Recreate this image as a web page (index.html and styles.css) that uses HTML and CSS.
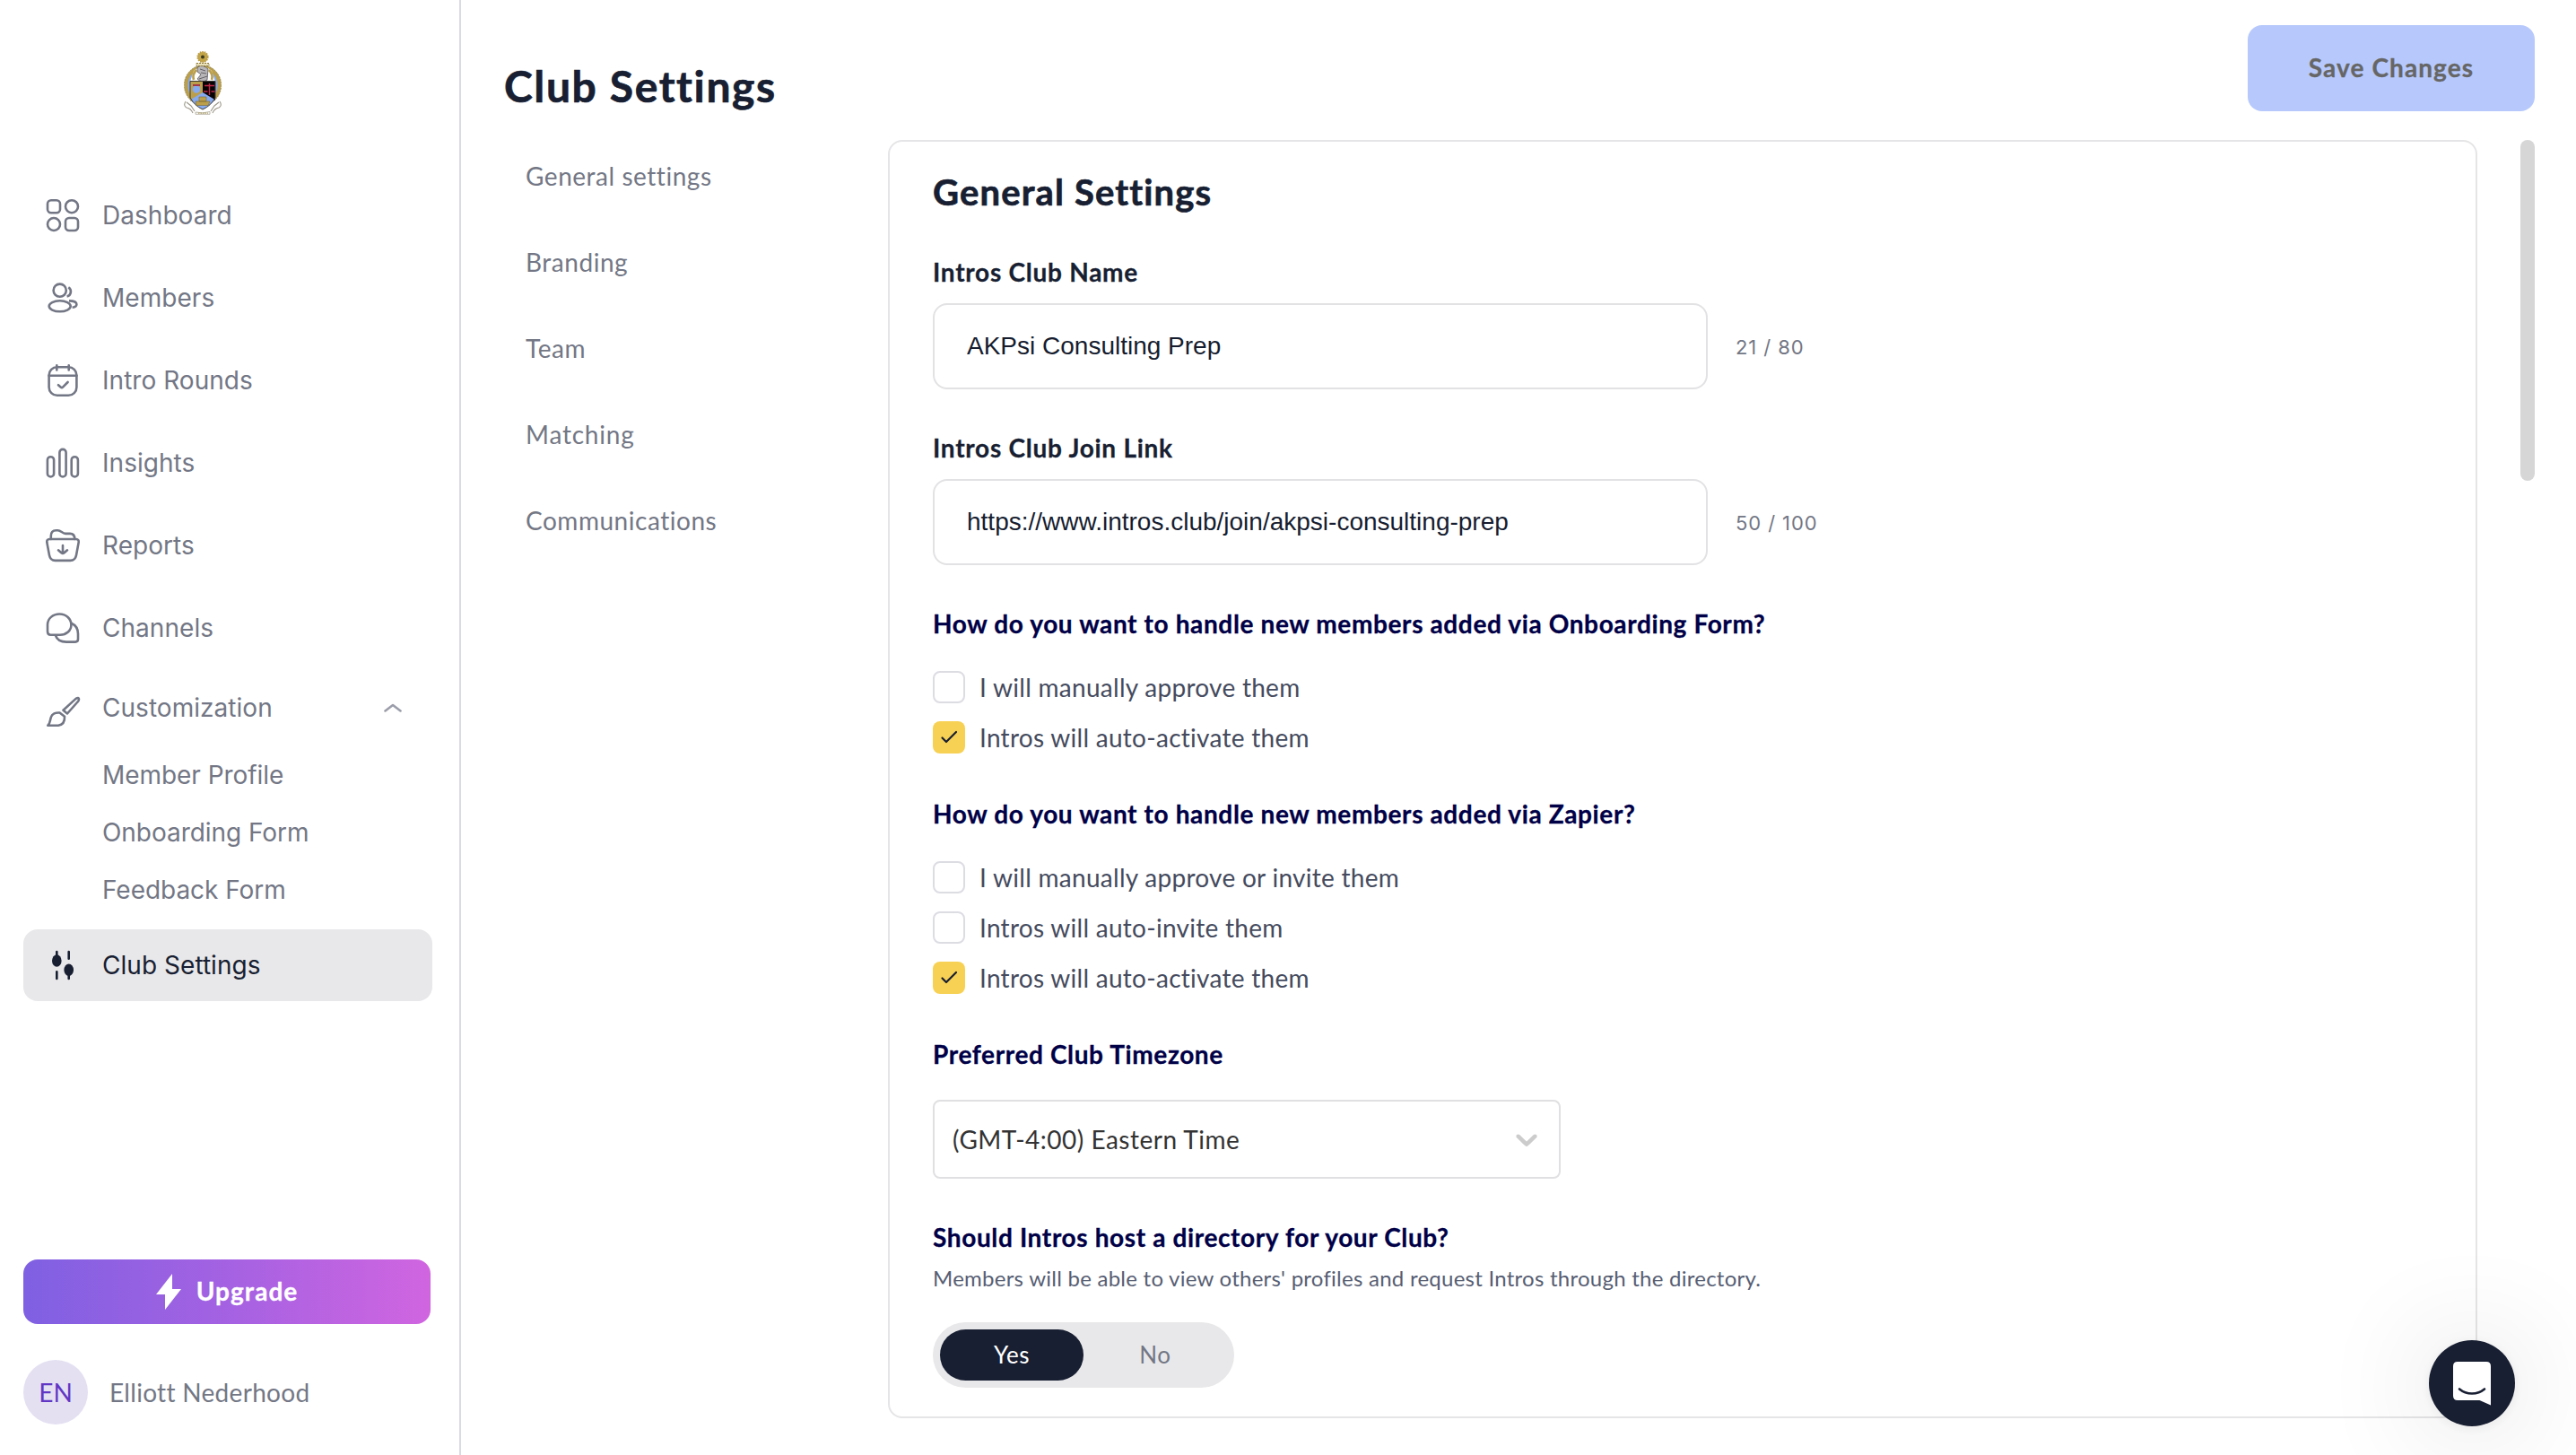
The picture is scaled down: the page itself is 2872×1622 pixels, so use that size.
FILE: index.html
```html
<!DOCTYPE html>
<html lang="en">
<head>
<meta charset="utf-8">
<title>Club Settings</title>
<link rel="stylesheet" href="styles.css">
</head>
<body>
<div class="app">
  <aside class="sidebar">
    <svg class="crest" viewBox="0 0 42 71" width="42" height="71">
      <ellipse cx="21" cy="38" rx="18.600" ry="20" fill="#86aaf0" stroke="#bb9f4a" stroke-width="4"/>
      <ellipse cx="21" cy="38" rx="20.700" ry="22" fill="none" stroke="#5f5636" stroke-width=".5" stroke-dasharray="2 1"/>
      <path d="M11 22Q21 13 31 22L35 34H7Z" fill="#fff"/>
      <path d="M14 21Q9 26 11 32M28 21Q33 26 31 32" fill="none" stroke="#bb9f4a" stroke-width="2.600"/>
      <path d="M15 18Q21 14 27 20L26 32Q20 36 15 31L19 26L15 23Z" fill="#b9b6b8" stroke="#55525a" stroke-width=".8"/>
      <path d="M18 20L24 22M19 24L25 25M17 31L26 28" stroke="#4e4b50" stroke-width=".8"/>
      <path d="M14 13.500H28V16.500H14Z" fill="#e9dfb9" stroke="#8f7c3c" stroke-width="1" stroke-dasharray="2 1"/>
      <circle cx="21" cy="6.500" r="5.600" fill="#c3a548" stroke="#b99c45" stroke-width="2" stroke-dasharray="1.500 1"/>
      <circle cx="21" cy="6.500" r="2" fill="#3b3a22"/>
      <path d="M7 34H21V48L7 56Z" fill="#bb9f4a"/>
      <path d="M21 34H35V55L21 47Z" fill="#070406"/>
      <path d="M7.600 54L21 46L34.400 54Q29 61 21 65Q13 61 7.600 54Z" fill="#86aaf0"/>
      <path d="M7 33.500H35V52Q30 61 21 65Q12 61 7 52Z" fill="none" stroke="#3c3b35" stroke-width="1"/>
      <circle cx="14" cy="42.500" r="4.300" fill="#86aaf0"/>
      <path d="M10 37H18V39H10Z" fill="#a3374c"/>
      <path d="M28.500 36V49M23 38.500H34M22 45H26.500M30.500 45H34.500" stroke="#c22846" stroke-width="1.400"/>
      <path d="M13 56H29L27 60.500H14ZM17 51H25V56H17Z" fill="#bb9f4a" stroke="#7b6a32" stroke-width=".6"/>
      <path d="M2 56Q-1 61 3 63Q8 64 10 69M40 56Q43 61 39 63Q34 64 32 69M3 57L8 61L12 67M39 57L34 61L30 67" fill="none" stroke="#9c9788" stroke-width="1.100"/>
      <path d="M13 68Q21 70 29 67.500V70.300H13Z" fill="#fff" stroke="#aaa593" stroke-width=".8"/>
      <path d="M16 69.200H27" stroke="#b0a067" stroke-width="1.200" stroke-dasharray="1.500 1"/>
    </svg>

    <nav class="nav">
      <a class="nav-item">
        <svg class="icon" viewBox="0 0 40 40"><rect x="3" y="3.200" width="14" height="14" rx="4"/><circle cx="30" cy="10.200" r="7"/><circle cx="10" cy="30" r="7"/><rect x="23" y="23" width="14" height="14" rx="4"/></svg>
        <span>Dashboard</span>
      </a>
      <a class="nav-item">
        <svg class="icon" viewBox="0 0 40 40"><circle cx="16.700" cy="11.700" r="7.100"/><ellipse cx="16.700" cy="29.300" rx="12" ry="6"/><path d="M26.300 8.300A5.600 5.600 0 0 1 24.600 18.500M27 23.400C32 23.400 35.400 25 35.400 27.300C35.400 29 33.500 30.400 30.600 30.800" stroke-linecap="butt"/></svg>
        <span>Members</span>
      </a>
      <a class="nav-item">
        <svg class="icon" viewBox="0 0 40 40"><rect x="4.600" y="5.300" width="30.800" height="31.400" rx="9"/><path d="M4.600 14.800H35.400M13.300 3.300V8.500M26.700 3.300V8.500M15 25.200L17.900 27.700Q19 28.500 20 27.600L25.600 22"/></svg>
        <span>Intro Rounds</span>
      </a>
      <a class="nav-item">
        <svg class="icon" viewBox="0 0 40 40"><rect x="2.900" y="13.200" width="7.200" height="22.300" rx="3.600"/><rect x="16.400" y="4.900" width="7.200" height="30.600" rx="3.600"/><rect x="29.700" y="13.200" width="7.200" height="22.300" rx="3.600"/></svg>
        <span>Insights</span>
      </a>
      <a class="nav-item">
        <svg class="icon" viewBox="0 0 40 40"><path d="M5 13H35C37 13 38 14.600 37.700 16.600L35 31C34.200 35 32 36.900 28.400 36.900H11.600C8 36.900 5.800 35 5 31L2.300 16.600C2 14.600 3 13 5 13Z"/><path d="M6.800 13V9.500C6.800 5.500 8.800 3.200 12.500 3.200H14.500C18 3.200 19.500 6.900 23 6.900H28C31.500 6.900 33.300 8.800 33.300 13M20 20V28.500M15 25.300L18.400 28.300Q20 29.500 21.600 28.300L25 25.300"/></svg>
        <span>Reports</span>
      </a>
      <a class="nav-item">
        <svg class="icon" viewBox="0 0 40 40"><path d="M3 16.500C3 9.500 9 4.500 16.400 4.500C23.800 4.500 29.400 9.800 29.400 16.500C29.400 23 24.200 27.700 17 27.700H6.500C4 27.700 3 26.500 3 24Z"/><path d="M29.500 14.800C34 16.800 37 21 37 26.500V32.500C37 34.500 36 35.600 34 35.600H24C18 35.600 13.500 33 12 28.500"/></svg>
        <span>Channels</span>
      </a>
      <a class="nav-item nav-group">
        <svg class="icon" viewBox="0 0 40 40"><path d="M20.500 18.700L34 6.400C35 5.500 37.200 4.600 37.700 5.600C38.200 6.600 37.500 8.500 36.500 9.500L25 22.500Z"/><path d="M3.300 35.700C6.300 33 5.500 30 7 26.200C8 23 12 21.200 16.500 21.500L22 25.800C22.300 31 20 35 15 35.700Z"/></svg>
        <span>Customization</span>
        <svg class="caret" viewBox="0 0 20 10"><path d="M1.500 8.500L10 2L18.500 8.500"/></svg>
      </a>
      <div class="subnav">
        <a>Member Profile</a>
        <a>Onboarding Form</a>
        <a>Feedback Form</a>
      </div>
      <a class="nav-item active">
        <svg class="icon" viewBox="0 0 40 40"><path d="M13.300 5V9M13.300 27.300V35M26.700 5V12.700M26.700 30V35"/><ellipse class="solid" cx="13.300" cy="15" rx="5.300" ry="6.700"/><ellipse class="solid" cx="26.700" cy="25.200" rx="5.300" ry="6.700"/></svg>
        <span>Club Settings</span>
      </a>
    </nav>

    <button class="upgrade">
      <svg viewBox="0 0 28 40" width="28" height="40"><polygon points="18,0 18,17 28,17 10,40 10,23 0,23" fill="#fff"/></svg>
      <span>Upgrade</span>
    </button>
    <div class="profile">
      <span class="avatar">EN</span>
      <span class="profile-name">Elliott Nederhood</span>
    </div>
  </aside>

  <main class="main">
    <header class="header">
      <h1>Club Settings</h1>
      <button class="save">Save Changes</button>
    </header>
    <div class="body">
      <nav class="tabs">
        <a>General settings</a>
        <a>Branding</a>
        <a>Team</a>
        <a class="wide">Matching</a>
        <a>Communications</a>
      </nav>

      <section class="card">
        <h2>General Settings</h2>

        <div class="field">
          <label class="label-name">Intros Club Name</label>
          <div class="input-row">
            <input type="text" value="AKPsi Consulting Prep">
            <span class="count">21 / 80</span>
          </div>
        </div>
        <div class="field">
          <label class="label-name">Intros Club Join Link</label>
          <div class="input-row">
            <input type="text" value="https://www.intros.club/join/akpsi-consulting-prep">
            <span class="count">50 / 100</span>
          </div>
        </div>

        <div class="question">
          <h3>How do you want to handle new members added via Onboarding Form?</h3>
          <div class="checks">
            <div class="check"><span class="box"></span><span>I will manually approve them</span></div>
            <div class="check"><span class="box on"><svg viewBox="0 0 36 36"><path d="M10.500 18.500L15 23L26 12"/></svg></span><span>Intros will auto-activate them</span></div>
          </div>
        </div>
        <div class="question">
          <h3>How do you want to handle new members added via Zapier?</h3>
          <div class="checks">
            <div class="check"><span class="box"></span><span>I will manually approve or invite them</span></div>
            <div class="check"><span class="box"></span><span>Intros will auto-invite them</span></div>
            <div class="check"><span class="box on"><svg viewBox="0 0 36 36"><path d="M10.500 18.500L15 23L26 12"/></svg></span><span>Intros will auto-activate them</span></div>
          </div>
        </div>

        <div class="question">
          <h3>Preferred Club Timezone</h3>
          <div class="select">
            <span>(GMT-4:00) Eastern Time</span>
            <svg viewBox="0 0 20 20" width="40" height="40"><path d="M4.516 7.548c0.436-0.446 1.043-0.481 1.576 0l3.908 3.747 3.908-3.747c0.533-0.481 1.141-0.446 1.574 0 0.436 0.445 0.408 1.197 0 1.615-0.406 0.418-4.695 4.502-4.695 4.502-0.217 0.223-0.502 0.335-0.787 0.335s-0.570-0.112-0.789-0.335c0 0-4.287-4.084-4.695-4.502s-0.436-1.170 0-1.615z" fill="#ccc"/></svg>
          </div>
        </div>

        <div class="question last">
          <h3>Should Intros host a directory for your Club?</h3>
          <p class="hint">Members will be able to view others' profiles and request Intros through the directory.</p>
          <div class="toggle"><span class="chosen">Yes</span><span>No</span></div>
        </div>
      </section>

      <div class="scrollbar"></div>
    </div>
  </main>
</div>

<div class="launcher">
  <svg viewBox="0 0 42 49" width="42" height="49"><path d="M5 0H37Q42 0 42 5V48.500L29.500 43H5Q0 43 0 38V5Q0 0 5 0Z" fill="#fff"/><path d="M7 30.500Q13 35.500 21 35.500T35 30.500" fill="none" stroke="#181f32" stroke-width="2.600" stroke-linecap="round"/></svg>
</div>
</body>
</html>
```
FILE: styles.css
```css
* { box-sizing: border-box; }

body {
  margin: 0;
  background: #fff;
  color: #181f32;
  font-family: Lato, "Open Sans", sans-serif;
  font-size: 28px;
  overflow: hidden;
}

h1, h2, h3, p { margin: 0; }
h1, h2 { -webkit-text-stroke: 0.7px currentColor; }
button { border: 0; padding: 0; font-family: inherit; }

.app { display: flex; height: 1622px; }

/* Sidebar */
.sidebar {
  flex: none;
  width: 514px;
  display: flex;
  flex-direction: column;
  padding: 57px 30px 34px 26px;
  border-right: 2px solid #dadae2;
}
.crest { flex: none; margin-left: 179px; }

.nav {
  display: flex;
  flex-direction: column;
  margin-top: 72px;
  font-family: Inter, sans-serif;
  letter-spacing: 0.04px;
  color: #737785;
}
.nav-item {
  display: flex;
  align-items: center;
  gap: 24px;
  height: 80px;
  margin-bottom: 12px;
  padding: 0 34px 0 24px;
  border-radius: 16px;
}
.icon {
  flex: none;
  width: 40px;
  height: 40px;
  fill: none;
  stroke: currentColor;
  stroke-width: 2.6;
  stroke-linecap: round;
  stroke-linejoin: round;
}
.icon .solid { fill: currentColor; stroke: none; }
.nav-group { height: 74px; margin-bottom: 6px; }
.nav-group .icon { margin-top: 8px; }
.caret {
  width: 20px;
  height: 10px;
  margin-left: auto;
  fill: none;
  stroke: #9b9eaa;
  stroke-width: 2.6;
  stroke-linecap: round;
  stroke-linejoin: round;
}
.subnav {
  display: flex;
  flex-direction: column;
  margin-bottom: 12px;
  padding-left: 88px;
  line-height: 64px;
  letter-spacing: -0.05px;
}
.active { margin-bottom: 0; background: #e8e8ea; color: #181f32; }

.upgrade {
  display: flex;
  align-items: center;
  justify-content: center;
  gap: 17px;
  width: 454px;
  height: 72px;
  margin-top: auto;
  border-radius: 16px;
  background: linear-gradient(90deg, #7f60e2, #a862e2 55%, #d165e0);
  color: #fff;
  font-size: 28px;
  font-weight: 700;
  letter-spacing: 1.05px;
}
.upgrade span { padding-bottom: 3px; -webkit-text-stroke: 0.3px currentColor; }

.profile { display: flex; align-items: center; gap: 24px; margin-top: 40px; }
.avatar {
  display: grid;
  place-items: center;
  width: 72px;
  height: 72px;
  border-radius: 50%;
  background: #e4e0f2;
  color: #6236c4;
}
.profile-name { color: #737785; letter-spacing: 0.3px; }

/* Main column */
.main { flex: 1; display: flex; flex-direction: column; }
.header {
  display: flex;
  align-items: flex-start;
  justify-content: space-between;
  height: 156px;
  padding: 28px 46px 0 48px;
}
h1 {
  margin-top: 39px;
  font-size: 48px;
  line-height: 58px;
  letter-spacing: 1.62px;
}
.save {
  width: 320px;
  height: 96px;
  padding-bottom: 2px;
  border-radius: 16px;
  background: #b7c9fc;
  color: #666;
  font-size: 28px;
  font-weight: 700;
  letter-spacing: 1.1px;
  -webkit-text-stroke: 0.3px currentColor;
}

.body { display: flex; align-items: flex-start; }
.tabs {
  flex: none;
  display: flex;
  flex-direction: column;
  gap: 56px;
  width: 476px;
  padding: 20px 0 0 72px;
  color: #737785;
  line-height: 40px;
  letter-spacing: 0.53px;
}
.tabs .wide { letter-spacing: 0.8px; }

.card {
  width: 1772px;
  height: 1425px;
  padding: 31px 48px 0;
  border: 2px solid #e5e5e7;
  border-radius: 16px;
}
h2 { font-size: 40px; line-height: 50px; letter-spacing: 1.15px; }

.field { margin-top: 48px; }
h2 + .field { margin-top: 47px; }
.field label {
  display: block;
  font-weight: 700;
  line-height: 34px;
  letter-spacing: 0.74px;
  -webkit-text-stroke: 0.3px currentColor;
}
.input-row { display: flex; align-items: center; gap: 31px; margin-top: 18px; }
.input-row input {
  width: 864px;
  height: 96px;
  padding: 0 36px;
  border: 2px solid #e2e2e4;
  border-radius: 16px;
  background: #fff;
  color: #161d2f;
  font-family: "Liberation Sans", Arial, sans-serif;
  font-size: 28px;
}
.count {
  color: #737785;
  font-family: Inter, sans-serif;
  font-size: 22px;
  letter-spacing: 0.9px;
  padding-top: 2px;
}

.question { margin-top: 50px; }
.field + .question, .question.last { margin-top: 48px; }
h3 {
  color: #000047;
  font-size: 28px;
  line-height: 34px;
  letter-spacing: 0.63px;
  -webkit-text-stroke: 0.3px currentColor;
}
.checks { display: flex; flex-direction: column; gap: 20px; margin-top: 36px; }
.check {
  display: flex;
  align-items: center;
  gap: 16px;
  height: 36px;
  color: #454b5e;
  line-height: 34px;
  letter-spacing: 0.28px;
}
.box {
  width: 36px;
  height: 36px;
  border: 2px solid #dcdce3;
  border-radius: 8px;
}
.box.on { border: 0; background: #f7d154; }
.box svg {
  display: block;
  fill: none;
  stroke: #181f32;
  stroke-width: 2.2;
  stroke-linecap: round;
  stroke-linejoin: round;
}

.select {
  display: flex;
  align-items: center;
  justify-content: space-between;
  width: 700px;
  height: 88px;
  margin-top: 34px;
  padding: 0 16px 0 20px;
  border: 2px solid #e0e0e2;
  border-radius: 8px;
  color: #333;
  letter-spacing: 0.5px;
}
.hint {
  margin-top: 14px;
  color: #575e73;
  font-size: 24px;
  line-height: 30px;
  letter-spacing: 0.25px;
}
.toggle {
  display: flex;
  align-items: center;
  width: 336px;
  height: 73px;
  margin-top: 34px;
  padding: 0 8px;
  border-radius: 37px;
  background: #e8e8ea;
  color: #737785;
  font-size: 26px;
  letter-spacing: 0.6px;
  text-align: center;
}
.toggle span { width: 160px; height: 57px; border-radius: 29px; line-height: 57px; }
.toggle .chosen { background: #181f32; color: #fff; }

.scrollbar {
  width: 16px;
  height: 380px;
  margin-left: 48px;
  border-radius: 8px;
  background: #d6d6d6;
}

/* Chat launcher floats over the page */
.launcher {
  position: absolute;
  left: 2708px;
  top: 1494px;
  display: grid;
  place-items: center;
  width: 96px;
  height: 96px;
  border-radius: 50%;
  background: #181f32;
  box-shadow: 0 2px 12px rgba(0, 0, 0, 0.06), 0 4px 128px rgba(0, 0, 0, 0.16);
}
```
